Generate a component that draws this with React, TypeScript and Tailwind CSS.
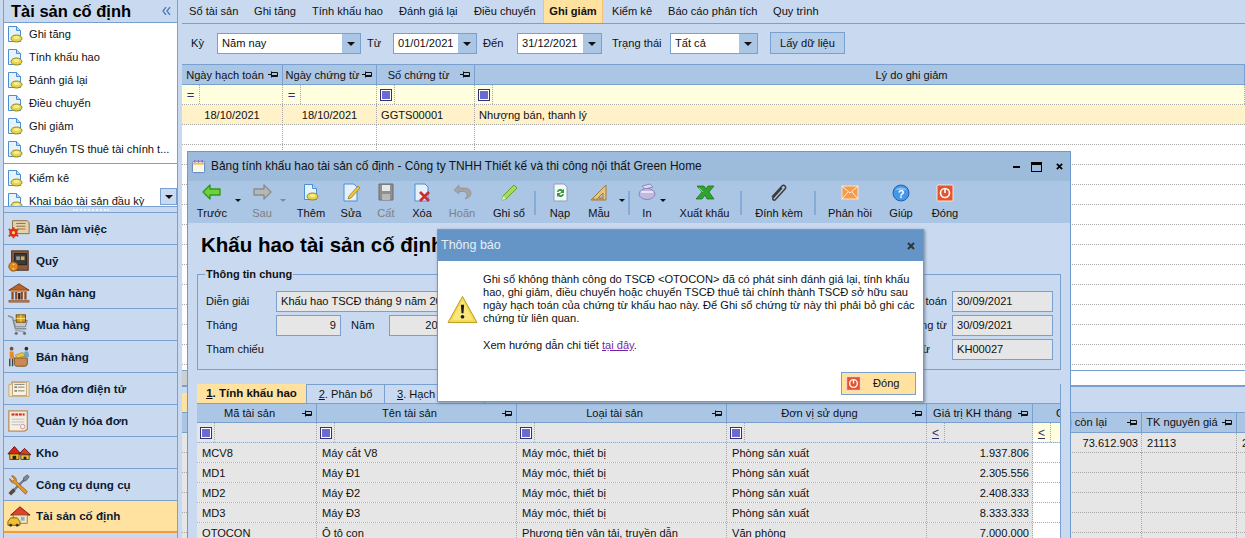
import type { ReactNode } from "react";

const Pin = () => (
  <svg viewBox="0 0 11 9" className="absolute right-[3px] top-[5px] w-[11px] h-[9px]">
    <path d="M0 4.5h3M3.5 1.5v6M3.5 2.5h6v4h-6M3.5 5.5h6" fill="none" stroke="#111" strokeWidth="1" />
  </svg>
);

const Caret = () => (
  <svg viewBox="0 0 8 4" className="w-[8px] h-[4px]">
    <path d="M0 0h8L4 4z" fill="#111" />
  </svg>
);

const FilterBox = () => (
  <span className="flex w-[12px] h-[12px] border border-[#33336b] items-center justify-center bg-white">
    <span className="w-[8px] h-[8px] bg-[#6a6ad2]" />
  </span>
);

const DocCoin = ({ className = "w-[16px] h-[17px]" }: { className?: string }) => (
  <svg viewBox="0 0 16 17" className={className}>
    <path d="M1.5.5h8l4 4v11h-12z" fill="#e8f2fc" stroke="#4a8fd6" />
    <path d="M9.5.5v4h4" fill="#bcd8f4" stroke="#4a8fd6" />
    <ellipse cx="9.5" cy="12.5" rx="5.5" ry="3.5" fill="#e8d34a" stroke="#8f8a20" />
    <ellipse cx="9.5" cy="11.5" rx="3" ry="1.5" fill="#f8ee90" />
  </svg>
);

const sideIcons: Record<string, ReactNode> = {
  desk: (
    <>
      <path d="M6 3h16l2 2v12H9l-3-3z" fill="#e6d2a8" stroke="#8d6b3d" />
      <path d="M10 6h10M10 9h10M12 12h8" stroke="#8d6b3d" />
      <circle cx="7" cy="16" r="4.500" fill="#e02b1c" />
      <circle cx="7" cy="16" r="1.800" fill="#f6d34a" />
      <path d="M2 12l2 2M12 12l-2 2M2 20l2-2M12 20l-2-2M7 10v2M7 20v2" stroke="#e02b1c" strokeWidth="2" />
    </>
  ),
  safe: (
    <>
      <rect x="5" y="1" width="18" height="21" fill="#8e5a3c" stroke="#4a2d1f" />
      <rect x="8" y="4" width="13" height="12" fill="#3d3a3a" stroke="#222" />
      <rect x="10" y="7" width="4" height="4" fill="#9a9a90" />
      <rect x="15" y="7" width="4" height="4" fill="#c9b25c" />
      <circle cx="7" cy="18" r="5" fill="#e08a1d" stroke="#93500f" />
      <path d="M6 15.500h2M6 20.500h2" stroke="#fff2b0" />
    </>
  ),
  bank: (
    <>
      <path d="M2 9L13 2l11 7z" fill="#b8652d" stroke="#6f3a18" />
      <rect x="4" y="9" width="18" height="2" fill="#d88c4a" />
      <path d="M6 11v8M10 11v8M16 11v8M20 11v8" stroke="#8a4b22" strokeWidth="2.400" />
      <rect x="12" y="12" width="2.500" height="7" fill="#3c2414" />
      <path d="M2 20h22v2H2z" fill="#c87a40" stroke="#7a4320" strokeWidth=".6" />
    </>
  ),
  cart: (
    <>
      <path d="M1 2l5 2 3 12h12" fill="none" stroke="#8a8f96" strokeWidth="1.600" />
      <path d="M7 7h15l-2 7H9z" fill="#c4c8ce" stroke="#777c84" />
      <rect x="10" y="1" width="10" height="8" fill="#d89a1d" stroke="#6d4a0d" />
      <path d="M15 1v8M10 5h10" stroke="#fbe27a" />
      <path d="M9 18l10 1" stroke="#8a8f96" />
      <circle cx="10" cy="21" r="1.700" fill="#6d7278" />
      <circle cx="19" cy="21" r="1.700" fill="#6d7278" />
    </>
  ),
  sell: (
    <>
      <circle cx="5" cy="3" r="2" fill="#7a4a2a" />
      <path d="M3 6h4l1 8H3z" fill="#e8892a" />
      <path d="M3 14v8M6 14v8" stroke="#33404f" strokeWidth="1.500" />
      <circle cx="21" cy="3" r="2" fill="#3a2a22" />
      <path d="M19 6h4l1 6h-6z" fill="#6ea4c6" />
      <path d="M8 13h14v7a3 3 0 0 1-3 2H11a3 3 0 0 1-3-2z" fill="#c98a52" stroke="#7a4e26" />
      <path d="M9 10l8-3 3 4-9 2z" fill="#e8c53a" stroke="#8d7518" strokeWidth=".6" />
    </>
  ),
  einv: (
    <>
      <path d="M2 7h3V4h19v16H2z" fill="#f4e4c8" stroke="#c8a878" />
      <rect x="6" y="5" width="15" height="14" fill="#fbf3e2" stroke="#c0a070" />
      <rect x="8" y="9" width="3" height="2" fill="#8a8a80" />
      <rect x="8" y="13" width="3" height="2" fill="#8a8a80" />
      <path d="M12 10h7M12 14h7M8 7h11" stroke="#7a7a70" />
    </>
  ),
  inv: (
    <>
      <path d="M2 1h20v20l-3 2H2z" fill="#f6efe2" stroke="#b89058" strokeWidth="1.400" />
      <rect x="4" y="3" width="16" height="4" fill="#e8e0d0" />
      <path d="M5 5h14" stroke="#d8241c" strokeWidth="2" strokeDasharray="3 1" />
      <path d="M5 10h14M5 13h14M5 16h9" stroke="#b9b9c4" />
      <circle cx="17" cy="18" r="2.500" fill="none" stroke="#d98aa0" />
    </>
  ),
  store: (
    <>
      <path d="M1 13l7-8 7 8z" fill="#d8241c" stroke="#5c120d" />
      <path d="M3 13h10v6H3z" fill="#f3bd2c" stroke="#5c4310" />
      <rect x="6" y="15" width="4" height="4" fill="#2c2410" />
      <path d="M13 13l6-6 7 7z" fill="#e03a22" stroke="#5c120d" />
      <path d="M15 14h9v5h-9z" fill="#f1c347" stroke="#5c4310" />
      <rect x="18" y="16" width="3" height="3" fill="#2c2410" />
    </>
  ),
  tools: (
    <>
      <path d="M5 20L20 5" stroke="#6f7a86" strokeWidth="2.400" />
      <path d="M3 22l5-5" stroke="#5b4a3a" strokeWidth="4" />
      <path d="M6 2a5 5 0 0 1 4 6l12 11-2 3L8 10A5 5 0 0 1 3 5l3 3 2-2-3-4z" fill="#e9962a" stroke="#8a5312" strokeWidth=".8" />
      <path d="M18 4l4-3 2 2-3 4-3 1z" fill="#7f8a96" stroke="#404a54" strokeWidth=".7" />
    </>
  ),
  asset: (
    <>
      <path d="M4 11L14 2l11 9z" fill="#e0402c" stroke="#7a1b10" />
      <path d="M7 11h15v9H7z" fill="#f4e2b8" stroke="#9b7a44" />
      <rect x="15" y="13" width="4" height="4" fill="#7fb4dc" />
      <path d="M1 18l3-4h7l3 4v4H1z" fill="#efc22c" stroke="#7a5d10" />
      <circle cx="4" cy="22" r="1.600" fill="#333" />
      <circle cx="11" cy="22" r="1.600" fill="#333" />
    </>
  ),
};

const sideList = ["Ghi tăng", "Tính khấu hao", "Đánh giá lại", "Điều chuyển", "Ghi giảm", "Chuyển TS thuê tài chính t..."];

const modules = [
  { name: "Bàn làm việc", icon: "desk" },
  { name: "Quỹ", icon: "safe" },
  { name: "Ngân hàng", icon: "bank" },
  { name: "Mua hàng", icon: "cart" },
  { name: "Bán hàng", icon: "sell" },
  { name: "Hóa đơn điện tử", icon: "einv" },
  { name: "Quản lý hóa đơn", icon: "inv" },
  { name: "Kho", icon: "store" },
  { name: "Công cụ dụng cụ", icon: "tools" },
  { name: "Tài sản cố định", icon: "asset", active: true },
];

function Sidebar() {
  return (
    <div className="w-[175px] ml-[3px] mr-[4px] shrink-0 h-[538px] border-x border-[#7aa0d0] flex flex-col overflow-hidden">
      <div className="h-[23px] shrink-0 border-b border-[#7aa0d0] flex items-center justify-between pl-[7px] pr-[6px]">
        <span className="text-[16.5px] font-bold text-black leading-none">Tài sản cố định</span>
        <svg viewBox="0 0 9 8" className="w-[9px] h-[8px]">
          <path d="M4 0L1 4l3 4M8 0L5 4l3 4" fill="none" stroke="#4a78c0" strokeWidth="1.300" />
        </svg>
      </div>
      <div className="relative h-[183px] shrink-0 bg-white overflow-hidden">
        {sideList.map((t) => (
          <div key={t} className="h-[23px] flex items-center pl-[3px] gap-[6px] whitespace-nowrap">
            <DocCoin />
            <span>{t}</span>
          </div>
        ))}
        <div className="h-px bg-[#7aa0d0] mt-[2px] mb-[3px]" />
        {["Kiểm kê", "Khai báo tài sản đầu kỳ"].map((t) => (
          <div key={t} className="h-[23px] flex items-center pl-[3px] gap-[6px] whitespace-nowrap">
            <DocCoin />
            <span>{t}</span>
          </div>
        ))}
        <button className="absolute right-0 top-[165px] w-[17px] h-[17px] bg-[#c9daf0] border border-[#7aa0d0] flex items-center justify-center">
          <Caret />
        </button>
      </div>
      <div className="h-[7px] shrink-0 border-y border-[#7aa0d0] flex items-center justify-center">
        <span className="w-[36px] border-t-2 border-dotted border-[#eef3fa]" />
      </div>
      {modules.map((m) => (
        <div
          key={m.name}
          className={`h-[32px] shrink-0 flex items-center gap-[5px] pl-[3px] border-b border-[#7aa0d0] font-bold ${
            m.active ? "bg-[#ffe29f] border-b-2 border-b-[#f29a3c]" : ""
          }`}
        >
          <svg viewBox="0 0 26 24" className="w-[24px] h-[24px] shrink-0">
            {sideIcons[m.icon]}
          </svg>
          <span className="text-[11.6px] text-[#0c1a33]">{m.name}</span>
        </div>
      ))}
    </div>
  );
}

const topTabs = [
  { t: "Sổ tài sản", w: "w-[65px]" },
  { t: "Ghi tăng", w: "w-[58px]" },
  { t: "Tính khấu hao", w: "w-[87px]" },
  { t: "Đánh giá lại", w: "w-[75px]" },
  { t: "Điều chuyển", w: "w-[69px]" },
];

function TopTabs() {
  return (
    <div className="h-[24px] shrink-0 border-b border-[#7aa0d0] flex items-center pl-[7px]">
      {topTabs.map((x) => (
        <span key={x.t} className={`${x.w} whitespace-nowrap`}>
          {x.t}
        </span>
      ))}
      <span className="w-[60px] h-[23px] bg-[#ffe29f] border-x border-[#f0c470] flex items-center justify-center font-bold">
        Ghi giảm
      </span>
      <span className="w-[65px] pl-[9px] whitespace-nowrap">Kiểm kê</span>
      <span className="w-[105px] whitespace-nowrap">Báo cáo phân tích</span>
      <span className="whitespace-nowrap">Quy trình</span>
    </div>
  );
}

const Combo = ({ value, className, btn = "w-[18px]" }: { value: string; className: string; btn?: string }) => (
  <div className={`${className} h-[21px] bg-white border border-[#7aa0d0] flex`}>
    <span className="flex-1 pl-[4px] leading-[19px] whitespace-nowrap overflow-hidden">{value}</span>
    <span className={`${btn} bg-[#abc6e5] flex items-center justify-center`}>
      <Caret />
    </span>
  </div>
);

function FilterBar() {
  return (
    <div className="h-[40px] shrink-0 flex items-start pt-[9px]">
      <span className="ml-[9px] w-[26px] leading-[21px]">Kỳ</span>
      <Combo value="Năm nay" className="w-[144px]" />
      <span className="ml-[6px] w-[26px] leading-[21px]">Từ</span>
      <Combo value="01/01/2021" className="w-[84px]" />
      <span className="ml-[6px] w-[34px] leading-[21px]">Đến</span>
      <Combo value="31/12/2021" className="w-[85px]" />
      <span className="ml-[10px] w-[58px] leading-[21px] whitespace-nowrap">Trạng thái</span>
      <Combo value="Tất cả" className="w-[88px]" />
      <button className="ml-[12px] -mt-[1px] w-[75px] h-[22px] bg-[#b4cde9] border border-[#7aa0d0] text-[#111]">
        Lấy dữ liệu
      </button>
    </div>
  );
}

const HeadCell = ({ children, className = "", pin = true, pad = "pr-[14px]" }: { children?: ReactNode; className?: string; pin?: boolean; pad?: string }) => (
  <div className={`relative border-r border-[#7aa0d0] flex items-center justify-center whitespace-nowrap overflow-hidden ${pad} ${className}`}>
    {children}
    {pin && <Pin />}
  </div>
);

const dotB = "border-b border-dotted border-[#a8a8a8]";
const dotR = "border-r border-dotted border-[#a8a8a8]";

function FilterCell({ kind = "box", className = "" }: { kind?: "box" | "eq" | "le"; className?: string }) {
  return (
    <div className={`flex items-center ${dotR} ${className}`}>
      <span className={`w-[18px] h-full shrink-0 flex items-center justify-center ${dotR}`}>
        {kind === "box" && <FilterBox />}
        {kind === "eq" && <span className="text-[#33336b] text-[13px] leading-none">=</span>}
        {kind === "le" && <span className="text-[#33336b] text-[12px] leading-none underline">&lt;</span>}
      </span>
    </div>
  );
}

const topCols = "grid grid-cols-[101px_94px_98px_1fr]";

function TopGrid() {
  return (
    <div className="h-[306px] shrink-0 border-t border-[#7aa0d0] overflow-hidden bg-white">
      <div className={`${topCols} h-[20px] bg-[#abc6e5] border-b border-[#7aa0d0]`}>
        <HeadCell className="pt-[1px]">Ngày hạch toán</HeadCell>
        <HeadCell className="pt-[1px]">Ngày chứng từ</HeadCell>
        <HeadCell className="pt-[1px]">Số chứng từ</HeadCell>
        <HeadCell pin={false} pad="pl-[104px]" className="pt-[1px]">Lý do ghi giảm</HeadCell>
      </div>
      <div className={`${topCols} h-[20px] bg-[#ffffe0] ${dotB}`}>
        <FilterCell kind="eq" />
        <FilterCell kind="eq" />
        <FilterCell />
        <FilterCell />
      </div>
      <div className={`${topCols} h-[20px] bg-[#fff1c8] ${dotB}`}>
        <div className={`text-center leading-[20px] ${dotR}`}>18/10/2021</div>
        <div className={`text-center leading-[20px] ${dotR}`}>18/10/2021</div>
        <div className={`pl-[4px] leading-[20px] ${dotR}`}>GGTS00001</div>
        <div className="pl-[4px] leading-[20px]">Nhượng bán, thanh lý</div>
      </div>
      {Array.from({ length: 12 }, (_, i) => (
        <div key={i} className={`${topCols} h-[20px] ${dotB}`}>
          <div className={dotR} />
          <div className={dotR} />
          <div className={dotR} />
          <div />
        </div>
      ))}
    </div>
  );
}

function LowerPanel() {
  const cols = "grid grid-cols-[820px_140px_95px_1fr]";
  return (
    <>
      <div className="h-[15px] shrink-0 border-t border-[#7aa0d0] bg-white">
        <div className="w-[5px] h-[14px] bg-[#cfcfcf]" />
      </div>
      <div className="h-[27px] shrink-0 border-t-2 border-[#7aa0d0] flex items-end">
        <span className="w-[100px] h-[19px] bg-[#ffe29f]" />
      </div>
      <div className={`${cols} h-[21px] shrink-0 bg-[#abc6e5] border-y border-[#7aa0d0]`}>
        <div />
        <HeadCell pad="pl-[6px]">Giá trị còn lại</HeadCell>
        <HeadCell>TK nguyên giá</HeadCell>
        <div />
      </div>
      <div className={`${cols} h-[20px] shrink-0 bg-[#e6e6e6] ${dotB}`}>
        <div />
        <div className={`text-right pr-[3px] leading-[20px] ${dotR}`}>73.612.903</div>
        <div className={`pl-[5px] leading-[20px] ${dotR}`}>21113</div>
        <div className="pl-[5px] leading-[20px]">2</div>
      </div>
      {[0, 1, 2, 3, 4].map((i) => (
        <div key={i} className={`${cols} h-[20px] shrink-0 bg-[#e6e6e6] ${dotB}`}>
          <div />
          <div className={dotR} />
          <div className={dotR} />
          <div />
        </div>
      ))}
    </>
  );
}

const toolIcons: Record<string, ReactNode> = {
  back: <path d="M1 9l7-7v4h10v6H8v4z" fill="#6fd03c" stroke="#2f9a1c" strokeWidth="1.400" strokeLinejoin="round" />,
  next: <path d="M19 9l-7-7v4H2v6h10v4z" fill="#b8b8b8" stroke="#8c8c8c" strokeWidth="1.400" strokeLinejoin="round" />,
  edit: (
    <>
      <path d="M3 1h10l3 3v14H3z" fill="#e4f0fc" stroke="#4a8fd6" />
      <path d="M8 13l9-10 2 2-9 10-3 1z" fill="#f2c53a" stroke="#a57c14" strokeWidth=".8" />
    </>
  ),
  save: (
    <>
      <path d="M3 1h14v16H3z" fill="#8f8f8f" stroke="#6c6c6c" />
      <rect x="6" y="2" width="8" height="6" fill="#e8e8e8" />
      <rect x="6" y="11" width="8" height="6" fill="#b8b8b8" />
    </>
  ),
  del: (
    <>
      <path d="M3 1h10l3 3v14H3z" fill="#e4f0fc" stroke="#4a8fd6" />
      <path d="M8 9l9 9M17 9l-9 9" stroke="#d22b2b" strokeWidth="2.800" />
    </>
  ),
  undo: <path d="M7 2L2 7l5 4V8.500h4c3 0 4 2 4 3.500 0 2-1 3-2 4 4-1 6-3 6-6 0-3-3-5-7-5H7z" fill="#a4a4a4" stroke="#888" strokeWidth=".6" />,
  post: (
    <>
      <path d="M3 17l1-4L15 2l3 3L7 16z" fill="#a6dc5a" stroke="#5ea228" />
      <path d="M3 17l1-4 3 3z" fill="#e8eec0" />
    </>
  ),
  load: (
    <>
      <path d="M4 1h10l3 3v14H4z" fill="#f4f8fc" stroke="#8aa0b8" />
      <path d="M7 9a3.500 3.500 0 0 1 6-2l1-1v4h-4l1.500-1.500A2 2 0 0 0 8.500 9zM14 11a3.500 3.500 0 0 1-6 2l-1 1v-4h4l-1.500 1.500a2 2 0 0 0 3-.5z" fill="#2fa02f" />
    </>
  ),
  tmpl: (
    <>
      <path d="M2 17L17 2v15z" fill="#e8c47c" stroke="#a07a34" />
      <path d="M9 15l5-5v5z" fill="#abc6e5" stroke="#a07a34" />
      <path d="M5 17v-2M8 17v-2M11 17v-2M14 17v-2" stroke="#7a5a22" strokeWidth=".7" />
    </>
  ),
  print: (
    <>
      <path d="M5 3l8-2 3 3-8 2z" fill="#dcd8f4" stroke="#8c88b8" />
      <ellipse cx="10" cy="11" rx="8" ry="5.500" fill="#c2b9e2" stroke="#8c88b8" />
      <path d="M4 9h12" stroke="#e8e4f8" strokeWidth="2" />
    </>
  ),
  xls: (
    <>
      <path d="M2 3h7l2 3 2-3h6l-5 6 5 7h-7l-2-4-3 4H1l6-7z" fill="#2fa52f" stroke="#146b14" strokeWidth=".7" />
      <path d="M4 5l4 4" stroke="#9ce06c" />
    </>
  ),
  clip: <path d="M4 14L14 3c2-2 5 1 3 3L7 17c-1 1-3-1-2-2l9-10" fill="none" stroke="#3c3c3c" strokeWidth="1.500" transform="translate(-1 0)" />,
  mail: (
    <>
      <rect x="2" y="3" width="16" height="13" fill="#f59b4a" stroke="#fbe2c6" />
      <path d="M2 3l8 7 8-7M2 16l6-7M18 16l-6-7" fill="none" stroke="#fff3e6" />
    </>
  ),
  help: (
    <>
      <circle cx="10" cy="10" r="8" fill="#4596e4" stroke="#1f64b4" />
      <path d="M4 7a7 5 0 0 1 12 0z" fill="#a8d4f6" opacity=".7" />
      <text x="10" y="14.500" fontSize="11" fontWeight="700" textAnchor="middle" fill="#fff">?</text>
    </>
  ),
  close: (
    <>
      <rect x="2" y="2" width="16" height="16" rx="1" fill="#e4552f" stroke="#fbe0d4" />
      <circle cx="10" cy="10" r="4.500" fill="none" stroke="#fff" strokeWidth="1.600" />
      <path d="M10 5v5" stroke="#fff" strokeWidth="1.600" />
    </>
  ),
};

type ToolItem = { label?: string; w: string; icon?: string; disabled?: boolean; arrow?: string; sep?: boolean };

const tools: ToolItem[] = [
  { label: "Trước", w: "w-[48px]", icon: "back", arrow: "right-[-5px]" },
  { label: "Sau", w: "w-[52px]", icon: "next", disabled: true, arrow: "right-[2px]" },
  { label: "Thêm", w: "w-[46px]", icon: "add" },
  { label: "Sửa", w: "w-[34px]", icon: "edit" },
  { label: "Cất", w: "w-[36px]", icon: "save", disabled: true },
  { label: "Xóa", w: "w-[36px]", icon: "del" },
  { label: "Hoãn", w: "w-[44px]", icon: "undo", disabled: true },
  { label: "Ghi sổ", w: "w-[50px]", icon: "post" },
  { sep: true, w: "w-[2px]" },
  { label: "Nạp", w: "w-[48px]", icon: "load" },
  { label: "Mẫu", w: "w-[30px]", icon: "tmpl", arrow: "right-[-11px]" },
  { w: "w-[14px]" },
  { sep: true, w: "w-[2px]" },
  { label: "In", w: "w-[34px]", icon: "print", arrow: "right-[-2px]" },
  { w: "w-[5px]" },
  { label: "Xuất khẩu", w: "w-[71px]", icon: "xls" },
  { sep: true, w: "w-[2px]" },
  { w: "w-[2px]" },
  { label: "Đính kèm", w: "w-[70px]", icon: "clip" },
  { sep: true, w: "w-[2px]" },
  { label: "Phản hồi", w: "w-[68px]", icon: "mail" },
  { label: "Giúp", w: "w-[34px]", icon: "help" },
  { label: "Đóng", w: "w-[54px]", icon: "close" },
];

function Toolbar() {
  return (
    <div className="h-[42px] bg-[#abc6e5] flex shrink-0">
      {tools.map((b, i) =>
        b.sep ? (
          <span key={i} className={`${b.w} h-[24px] mt-[10px] bg-[#86abd6]`} />
        ) : (
          <div key={i} className={`${b.w} relative shrink-0 flex flex-col items-center whitespace-nowrap ${b.disabled ? "text-[#808080]" : "text-[#111]"}`}>
            {b.icon && (
              <>
                {b.icon === "add" ? (
                  <span className="h-[22px] pt-[3px] block">
                    <DocCoin />
                  </span>
                ) : (
                  <svg viewBox="0 0 20 20" className="w-[20px] h-[20px] mt-[2px]">
                    {toolIcons[b.icon]}
                  </svg>
                )}
                <span className="mt-[1px] leading-[18px]">{b.label}</span>
              </>
            )}
            {b.arrow && (
              <span className={`absolute top-[18px] ${b.arrow}`}>
                <svg viewBox="0 0 6 3" className={`w-[6px] h-[3px] ${b.disabled ? "fill-[#888]" : "fill-[#111]"}`}>
                  <path d="M0 0h6L3 3z" />
                </svg>
              </span>
            )}
          </div>
        )
      )}
    </div>
  );
}

const RoField = ({ children, className }: { children: ReactNode; className: string }) => (
  <div className={`h-[21px] bg-[#e6e6e6] border border-[#7aa0d0] leading-[19px] px-[4px] whitespace-nowrap overflow-hidden ${className}`}>{children}</div>
);

function GeneralInfo() {
  return (
    <fieldset className="mx-[9px] border border-[#7aa0d0] h-[103px] shrink-0">
      <legend className="ml-[7px] px-[1px] font-bold text-[11px] leading-[14px]">Thông tin chung</legend>
      <div className="flex flex-col gap-[3px] pt-[10px] pl-[8px]">
        <div className="flex items-center">
          <span className="w-[70px]">Diễn giải</span>
          <RoField className="w-[640px]">Khấu hao TSCĐ tháng 9 năm 2021</RoField>
          <span className="w-[31px] whitespace-nowrap flex justify-end">Ngày hạch toán</span>
          <RoField className="ml-[5px] w-[101px]">30/09/2021</RoField>
        </div>
        <div className="flex items-center">
          <span className="w-[70px]">Tháng</span>
          <RoField className="w-[65px] text-right">9</RoField>
          <span className="w-[48px] pl-[10px]">Năm</span>
          <RoField className="w-[66px] text-right">2021</RoField>
          <span className="w-[492px] whitespace-nowrap flex justify-end">Ngày chứng từ</span>
          <RoField className="ml-[5px] w-[101px]">30/09/2021</RoField>
        </div>
        <div className="flex items-center">
          <span className="w-[710px]">Tham chiếu</span>
          <span className="w-[14px] whitespace-nowrap flex justify-end">Số chứng từ</span>
          <RoField className="ml-[22px] w-[101px]">KH00027</RoField>
        </div>
      </div>
    </fieldset>
  );
}

const detailRows = [
  ["MCV8", "Máy cắt V8", "Máy móc, thiết bị", "Phòng sản xuất", "1.937.806"],
  ["MD1", "Máy Đ1", "Máy móc, thiết bị", "Phòng sản xuất", "2.305.556"],
  ["MD2", "Máy Đ2", "Máy móc, thiết bị", "Phòng sản xuất", "2.408.333"],
  ["MD3", "Máy Đ3", "Máy móc, thiết bị", "Phòng sản xuất", "8.333.333"],
  ["OTOCON", "Ô tô con", "Phương tiện vận tải, truyền dẫn", "Văn phòng", "7.000.000"],
];

function DetailGrid() {
  const cols = "grid grid-cols-[120px_200px_210px_200px_106px_28px]";
  return (
    <div className="mx-[9px] border-r border-[#7aa0d0] overflow-hidden">
      <div className="flex h-[19px] text-[#111]">
        <span className="w-[109px] bg-[#ffe29f] flex items-center justify-center font-bold text-[11.5px]">
          <span className="underline">1</span>. Tính khấu hao
        </span>
        <span className="w-[79px] border-x border-t border-[#7aa0d0] flex items-center justify-center">
          <span className="underline">2</span>. Phân bổ
        </span>
        <span className="w-[100px] border-r border-t border-[#7aa0d0] flex items-center pl-[12px]">
          <span className="underline">3</span>. Hạch toán
        </span>
      </div>
      <div className={`${cols} h-[20px] bg-[#abc6e5] border-y border-[#7aa0d0]`}>
        <HeadCell>Mã tài sản</HeadCell>
        <HeadCell>Tên tài sản</HeadCell>
        <HeadCell>Loại tài sản</HeadCell>
        <HeadCell>Đơn vị sử dụng</HeadCell>
        <HeadCell>Giá trị KH tháng</HeadCell>
        <div className="overflow-hidden whitespace-nowrap pl-[23px] leading-[18px]">Giá trị</div>
      </div>
      <div className={`${cols} h-[20px] ${dotB}`}>
        <FilterCell className="bg-[#e6e6e6]" />
        <FilterCell className="bg-[#e6e6e6]" />
        <FilterCell className="bg-[#e6e6e6]" />
        <FilterCell className="bg-[#e6e6e6]" />
        <FilterCell kind="le" className="bg-[#e6e6e6]" />
        <FilterCell kind="le" className="bg-[#ffffe0]" />
      </div>
      {detailRows.map((r) => (
        <div key={r[0]} className={`${cols} h-[20px] ${dotB} bg-white`}>
          {r.map((c, i) => (
            <div key={i} className={`bg-[#e6e6e6] leading-[20px] whitespace-nowrap overflow-hidden ${dotR} ${i === 4 ? "text-right pr-[3px]" : "pl-[5px]"}`}>
              {c}
            </div>
          ))}
          <div className={dotR} />
        </div>
      ))}
    </div>
  );
}

function DepreciationWindow() {
  return (
    <div className="absolute left-[187px] top-[151px] w-[884px] h-[400px] bg-[#c9daf0] border border-[#6e9ad0] flex flex-col">
      <div className="h-[29px] shrink-0 bg-[#9dbcdc] flex items-center pl-[3px] text-[11.9px] text-[#111]">
        <svg viewBox="0 0 16 16" className="w-[15px] h-[15px] mr-[5px]">
          <rect x="1.500" y="2.500" width="13" height="12" rx="1" fill="#fdf8e4" stroke="#5b7fc0" />
          <path d="M2 5h12" stroke="#f0c040" strokeWidth="2" />
          <path d="M4 1v3M8 1v3M12 1v3" stroke="#8a6cc0" strokeWidth="1.200" />
        </svg>
        <span className="whitespace-nowrap">Bảng tính khấu hao tài sản cố định - Công ty TNHH Thiết kế và thi công nội thất Green Home</span>
        <span className="ml-auto flex items-center gap-[11px] pr-[7px]">
          <span className="w-[7px] h-[2px] bg-black" />
          <span className="w-[11px] h-[10px] border border-black border-t-[3px]" />
          <svg viewBox="0 0 8 8" className="ml-[3px] w-[7px] h-[7px]">
            <path d="M1 1l6 6M7 1l-6 6" stroke="#000" strokeWidth="2" />
          </svg>
        </span>
      </div>
      <Toolbar />
      <h1 className="h-[44px] shrink-0 pl-[13px] flex items-center text-[20.5px] font-bold text-black whitespace-nowrap overflow-hidden">Khấu hao tài sản cố định</h1>
      <GeneralInfo />
      <div className="h-[14px] shrink-0" />
      <DetailGrid />
    </div>
  );
}

function NoticeDialog() {
  return (
    <div className="absolute left-[437px] top-[229px] w-[487px] h-[173px] bg-white border border-[#6e9ad0] shadow-[1px_1px_3px_rgba(60,80,110,0.6)] flex flex-col">
      <div className="h-[31px] shrink-0 bg-[#6595c6] flex items-center justify-between pl-[3px] pr-[8px] text-[12.5px] text-[#e8eef6]">
        <span>Thông báo</span>
        <svg viewBox="0 0 8 8" className="w-[8px] h-[8px]">
          <path d="M1 1l6 6M7 1l-6 6" stroke="#333" strokeWidth="2" />
        </svg>
      </div>
      <div className="flex flex-1 pl-[9px] pt-[13px]">
        <svg viewBox="0 0 32 30" className="w-[31px] h-[29px] mt-[21px] shrink-0">
          <path d="M16 1.500L31 28.500H1z" fill="#f5d94c" stroke="#b89a1e" strokeLinejoin="round" />
          <path d="M16 5L27 26H5z" fill="#fbe77c" />
          <path d="M14.300 10h3.400l-.7 9h-2z" fill="#1c1c1c" />
          <circle cx="16" cy="22.500" r="1.900" fill="#1c1c1c" />
        </svg>
        <div className="ml-[5px] w-[434px] text-[#111]">
          <p className="leading-[13px] mt-[-1px]">
            Ghi sổ không thành công do TSCĐ &lt;OTOCON&gt; đã có phát sinh đánh giá lại, tính khấu hao, ghi giảm, điều chuyển hoặc chuyển TSCĐ thuê tài chính thành TSCĐ sở hữu sau ngày hạch toán của chứng từ khấu hao này. Để Ghi sổ chứng từ này thì phải bỏ ghi các chứng từ liên quan.
          </p>
          <p className="leading-[13px] mt-[14px]">
            Xem hướng dẫn chi tiết <span className="text-[#7a1fa2] underline">tại đây</span>.
          </p>
        </div>
      </div>
      <div className="flex justify-end pr-[7px] pb-[6px]">
        <button className="w-[75px] h-[23px] bg-[#ffe29f] border border-[#7aa0d0] flex items-center pl-[3px]">
          <svg viewBox="0 0 20 20" className="w-[17px] h-[17px]">
            {toolIcons.close}
          </svg>
          <span className="ml-[11px] leading-none">Đóng</span>
        </button>
      </div>
    </div>
  );
}

export default function App() {
  return (
    <div className="relative w-[1245px] h-[538px] overflow-hidden bg-[#c9daf0] flex font-['Liberation_Sans',Arial,sans-serif] text-[11.1px] text-[#111]">
      <Sidebar />
      <div className="flex-1 min-w-0 flex flex-col">
        <TopTabs />
        <FilterBar />
        <TopGrid />
        <LowerPanel />
      </div>
      <DepreciationWindow />
      <NoticeDialog />
    </div>
  );
}
